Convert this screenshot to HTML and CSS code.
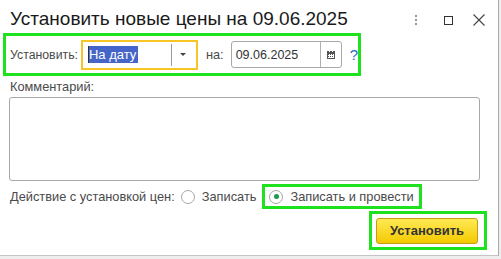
FILE: index.html
```html
<!DOCTYPE html>
<html lang="ru">
<head>
<meta charset="utf-8">
<title>Установить новые цены</title>
<link rel="stylesheet" href="styles.css">
</head>
<body>
<div class="window">
  <div class="titlebar">
    <div class="title">Установить новые цены на 09.06.2025</div>
    <div class="title-actions">
      <svg class="ico-more" width="4" height="12" viewBox="0 0 4 12"><circle cx="2" cy="2" r="1.2" fill="#9a9a9a"/><circle cx="2" cy="6" r="1.2" fill="#9a9a9a"/><circle cx="2" cy="10" r="1.2" fill="#9a9a9a"/></svg>
      <svg class="ico-max" width="9" height="9" viewBox="0 0 9 9"><rect x="0.5" y="0.5" width="8" height="8" fill="none" stroke="#333" stroke-width="1"/></svg>
      <svg class="ico-close" width="12" height="12" viewBox="0 0 12 12"><path d="M0.5 0.5 L11.5 11.5 M11.5 0.5 L0.5 11.5" stroke="#444" stroke-width="1.1" fill="none"/></svg>
    </div>
  </div>

  <div class="content">
    <div class="hl row-set">
      <span class="label set-label">Установить:</span>
      <div class="combo">
        <span class="sel">На дату</span>
        <span class="combo-div"></span>
        <span class="combo-arrow"></span>
      </div>
      <span class="label na">на:</span>
      <div class="date">
        <span class="date-text">09.06.2025</span>
        <span class="date-div"></span>
        <svg class="cal" width="8" height="8" viewBox="0 0 8 8"><rect x="0" y="0" width="8" height="8" fill="#555"/><rect x="1" y="3" width="6" height="4" fill="#fff"/><rect x="1" y="3" width="1" height="1" fill="#555"/><rect x="3" y="3" width="1" height="1" fill="#555"/><rect x="5" y="3" width="1" height="1" fill="#555"/><rect x="1" y="5" width="1" height="1" fill="#555"/><rect x="3" y="5" width="1" height="1" fill="#555"/><rect x="5" y="5" width="1" height="1" fill="#555"/><rect x="2" y="0" width="1" height="1" fill="#fff"/><rect x="5" y="0" width="1" height="1" fill="#fff"/></svg>
      </div>
      <span class="help">?</span>
    </div>

    <div class="label comment-label">Комментарий:</div>
    <div class="textarea"></div>

    <div class="action-row">
      <span class="label">Действие с установкой цен:</span>
      <span class="radio"></span>
      <span class="label radio-text">Записать</span>
      <div class="hl radio-box">
        <span class="radio checked"><span class="dot"></span></span>
        <span class="label radio-text">Записать и провести</span>
      </div>
    </div>

    <div class="button-row">
      <div class="hl btn-box">
        <div class="btn">Установить</div>
      </div>
    </div>
  </div>
</div>
</body>
</html>
```

FILE: styles.css
```css
html, body {
  margin: 0;
  padding: 0;
  background: #eeeeee;
}
body {
  font-family: "Liberation Sans", Arial, sans-serif;
  width: 501px;
  height: 259px;
  overflow: hidden;
}
.window {
  width: 498px;
  height: 255px;
  background: #fff;
  border-right: 1px solid #a9a9a9;
  border-bottom: 1px solid #c4c4c4;
  display: flex;
  flex-direction: column;
}
.titlebar {
  height: 33px;
  display: flex;
  align-items: flex-start;
  padding-left: 10px;
  padding-right: 13px;
}
.title {
  font-size: 19px;
  line-height: 24px;
  padding-top: 7px;
  color: #1a1a1a;
  white-space: nowrap;
}
.title-actions {
  margin-left: auto;
  display: flex;
  align-items: center;
  height: 40px;
}
.ico-more { margin-right: 26px; margin-top: -1px; }
.ico-max { margin-right: 20px; }
.content {
  display: flex;
  flex-direction: column;
}
.hl {
  border: 3px solid #1ee21e;
  box-sizing: border-box;
}
.label {
  font-size: 12.8px;
  color: #4a4a4a;
  white-space: nowrap;
}
.set-label {
  font-size: 12.3px;
}
.row-set {
  margin-left: 3px;
  width: 358px;
  height: 43px;
  display: flex;
  align-items: center;
  padding-left: 4px;
}
.combo {
  margin-left: 3px;
  width: 118px;
  height: 30px;
  box-sizing: border-box;
  border: 2px solid #f7c528;
  display: flex;
  align-items: center;
  padding-left: 5px;
}
.sel {
  font-size: 13px;
  line-height: 17px;
  background: #4565c8;
  color: #fff;
  padding: 0 2px 0 0;
  border-left: 1px solid #333;
  white-space: nowrap;
}
.combo-div {
  margin-left: auto;
  width: 1px;
  height: 22px;
  background: #9a9a9a;
}
.combo-arrow {
  margin-left: 8px;
  margin-right: 10px;
  width: 0;
  height: 0;
  border-left: 3px solid transparent;
  border-right: 3px solid transparent;
  border-top: 3px solid #444;
}
.na {
  margin-left: 8px;
}
.date {
  margin-left: 7px;
  width: 112px;
  height: 27px;
  box-sizing: border-box;
  border: 1px solid #a8a8a8;
  border-radius: 3px;
  display: flex;
  align-items: center;
  padding-left: 4px;
}
.date-text {
  font-size: 12.5px;
  color: #333;
}
.date-div {
  margin-left: auto;
  width: 1px;
  height: 25px;
  background: #b0b0b0;
}
.cal {
  margin-left: 6px;
  margin-right: 6px;
}
.help {
  margin-left: 8px;
  font-size: 15px;
  color: #1f6fc4;
}
.comment-label {
  margin-left: 10px;
  margin-top: 3px;
  line-height: 16px;
}
.textarea {
  margin-left: 9px;
  margin-top: 2px;
  width: 471px;
  height: 84px;
  box-sizing: border-box;
  border: 1px solid #a8a8a8;
  border-radius: 3px;
}
.action-row {
  margin-top: 3px;
  margin-left: 10px;
  display: flex;
  align-items: center;
  height: 25px;
}
.radio {
  width: 14px;
  height: 14px;
  box-sizing: border-box;
  border: 1px solid #a6a6a6;
  border-radius: 50%;
  display: inline-flex;
  align-items: center;
  justify-content: center;
  margin-left: 6px;
  background: #fff;
}
.radio-text {
  margin-left: 7px;
}
.radio-box {
  margin-left: 6px;
  height: 25px;
  display: flex;
  align-items: center;
  padding-left: 1px;
  padding-right: 5px;
}
.radio-box .radio {
  margin-left: 3px;
}
.dot {
  width: 5px;
  height: 5px;
  border-radius: 50%;
  background: #1a9a4a;
}
.button-row {
  margin-top: 2px;
  display: flex;
  justify-content: flex-end;
  padding-right: 11px;
}
.btn-box {
  width: 118px;
  height: 39px;
  display: flex;
  align-items: center;
  padding-left: 4px;
}
.btn {
  width: 102px;
  height: 26px;
  box-sizing: border-box;
  border: 1px solid #c59d10;
  border-radius: 3px;
  background: linear-gradient(#ffea55, #f3c900);
  font-size: 13px;
  font-weight: bold;
  color: #333;
  display: flex;
  align-items: center;
  justify-content: center;
}
```
